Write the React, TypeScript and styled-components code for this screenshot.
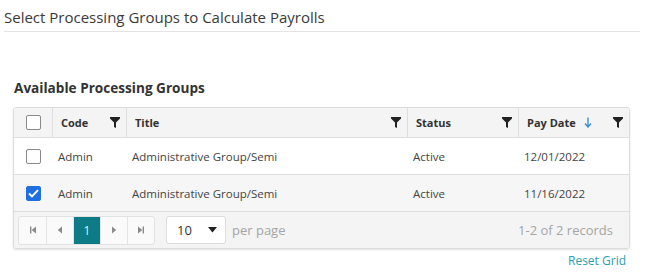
import React from "react";
import styled, { createGlobalStyle } from "styled-components";

const Global = createGlobalStyle`
  body { margin: 0; font-family: "Open Sans", "Noto Sans", sans-serif; color: #333; background: #fff; }
  * { box-sizing: border-box; }
`;

const Page = styled.div`
  width: 653px;
  padding: 7px 13px 0 4px;
`;

const Title = styled.h1`
  margin: 0;
  font-size: 15px;
  font-weight: 400;
  color: #3a3a3a;
  line-height: 20px;
  padding-bottom: 4px;
  border-bottom: 1px solid #e4e4e4;
`;

const Section = styled.div`
  padding: 46px 0 0 9px;
`;

const SectionTitle = styled.h2`
  margin: 0 0 9px 1px;
  font-size: 13.6px;
  font-weight: 700;
  color: #333;
  line-height: 20px;
`;

const Grid = styled.div`
  width: 617px;
  border: 1px solid #dcdcdc;
  border-radius: 3px;
  box-shadow: 0 1px 2px rgba(0, 0, 0, 0.12);
  overflow: hidden;
`;

const cols = "38px 74px 281px 111px 1fr";

const HeaderRow = styled.div`
  display: grid;
  grid-template-columns: ${cols};
  height: 30px;
  background: #f4f4f4;
  border-bottom: 1px solid #dedede;
`;

const HeadCell = styled.div`
  display: flex;
  align-items: center;
  padding: 0 6px 0 8px;
  font-size: 11px;
  font-weight: 700;
  color: #333;
  border-left: 1px solid #dedede;
  gap: 8px;
`;

const HeadLabel = styled.span`
  flex: 0 0 auto;
`;

const Spacer = styled.span`
  flex: 1;
`;

const Row = styled.div<{ $alt?: boolean }>`
  display: grid;
  grid-template-columns: ${cols};
  height: 37px;
  background: ${(p) => (p.$alt ? "#f6f6f6" : "#fff")};
  border-bottom: 1px solid #dedede;
`;

const Cell = styled.div`
  display: flex;
  align-items: center;
  padding: 0 6px;
  font-size: 11.5px;
  color: #444;
`;

const CheckCell = styled.div`
  display: flex;
  align-items: center;
  justify-content: flex-start;
  padding-left: 12px;
`;

const Box = styled.span<{ $checked?: boolean }>`
  width: 15px;
  height: 15px;
  border-radius: 2px;
  border: 1px solid ${(p) => (p.$checked ? "#1f6fe0" : "#8a8a8a")};
  background: ${(p) => (p.$checked ? "#1f6fe0" : "#fff")};
  display: flex;
  align-items: center;
  justify-content: center;
`;

const Pager = styled.div`
  height: 36px;
  background: #f4f4f4;
  display: flex;
  align-items: center;
  padding: 0 16px 0 4px;
`;

const PageButtons = styled.div`
  display: flex;
  border: 1px solid #e2e2e2;
  border-radius: 3px;
  overflow: hidden;
  background: #fafafa;
`;

const PageBtn = styled.div<{ $active?: boolean }>`
  width: 27px;
  height: 27px;
  display: flex;
  align-items: center;
  justify-content: center;
  font-size: 12px;
  color: ${(p) => (p.$active ? "#d9f2f4" : "#888")};
  background: ${(p) => (p.$active ? "#0e7c86" : "transparent")};
  & + & {
    border-left: 1px solid #e4e4e4;
  }
`;

const Select = styled.div`
  margin-left: 11px;
  width: 60px;
  height: 28px;
  border: 1px solid #dcdcdc;
  border-radius: 3px;
  background: #fff;
  display: flex;
  align-items: center;
  padding: 0 8px 0 10px;
  font-size: 13px;
  color: #333;
`;

const PerPage = styled.span`
  margin-left: 6px;
  font-size: 13px;
  color: #a5a5a5;
`;

const Records = styled.span`
  margin-left: auto;
  font-size: 13px;
  color: #a5a5a5;
`;

const ResetRow = styled.div`
  width: 617px;
  display: flex;
  justify-content: flex-end;
  padding: 3px 4px 0 0;
`;

const ResetLink = styled.a`
  font-size: 12px;
  color: #2a9fb0;
  text-decoration: none;
  line-height: 18px;
`;

const Filter = () => (
  <svg width="10" height="11" viewBox="0 0 10 11">
    <path d="M0 0h10v1.6L6 5.6V11L4 10V5.6L0 1.6z" fill="#222" />
  </svg>
);

const SortDown = () => (
  <svg width="8" height="11" viewBox="0 0 8 11">
    <path d="M4 0.5v9M1 6.5l3 3.5 3-3.5" stroke="#3d8fd8" strokeWidth="1.4" fill="none" />
  </svg>
);

const Check = () => (
  <svg width="11" height="9" viewBox="0 0 11 9">
    <path d="M1 4.5l3 3L10 1.2" stroke="#fff" strokeWidth="1.9" fill="none" />
  </svg>
);

const Tri = ({ dir }: { dir: "first" | "prev" | "next" | "last" }) => {
  const g = "#8a8a8a";
  if (dir === "first")
    return (
      <svg width="8" height="8" viewBox="0 0 8 8">
        <rect x="1" y="0.5" width="1.4" height="7" fill={g} />
        <path d="M7 0.5v7L2.6 4z" fill={g} />
      </svg>
    );
  if (dir === "last")
    return (
      <svg width="8" height="8" viewBox="0 0 8 8">
        <rect x="5.6" y="0.5" width="1.4" height="7" fill={g} />
        <path d="M1 0.5v7L5.4 4z" fill={g} />
      </svg>
    );
  if (dir === "prev")
    return (
      <svg width="6" height="8" viewBox="0 0 6 8">
        <path d="M5 0.5v7L0.8 4z" fill={g} />
      </svg>
    );
  return (
    <svg width="6" height="8" viewBox="0 0 6 8">
      <path d="M1 0.5v7L5.2 4z" fill={g} />
    </svg>
  );
};

const Caret = () => (
  <svg width="9" height="6" viewBox="0 0 9 6" style={{ marginLeft: "auto" }}>
    <path d="M0 0h9L4.5 5.5z" fill="#222" />
  </svg>
);

const rows = [
  { checked: false, code: "Admin", title: "Administrative Group/Semi", status: "Active", date: "12/01/2022" },
  { checked: true, code: "Admin", title: "Administrative Group/Semi", status: "Active", date: "11/16/2022" },
];

export default function App() {
  return (
    <Page>
      <Global />
      <Title>Select Processing Groups to Calculate Payrolls</Title>
      <Section>
        <SectionTitle>Available Processing Groups</SectionTitle>
        <Grid>
          <HeaderRow>
            <CheckCell>
              <Box />
            </CheckCell>
            <HeadCell>
              <HeadLabel>Code</HeadLabel>
              <Spacer />
              <Filter />
            </HeadCell>
            <HeadCell>
              <HeadLabel>Title</HeadLabel>
              <Spacer />
              <Filter />
            </HeadCell>
            <HeadCell>
              <HeadLabel>Status</HeadLabel>
              <Spacer />
              <Filter />
            </HeadCell>
            <HeadCell>
              <HeadLabel>Pay Date</HeadLabel>
              <SortDown />
              <Spacer />
              <Filter />
            </HeadCell>
          </HeaderRow>
          {rows.map((r, i) => (
            <Row key={i} $alt={i === 1}>
              <CheckCell>
                <Box $checked={r.checked}>{r.checked && <Check />}</Box>
              </CheckCell>
              <Cell>{r.code}</Cell>
              <Cell>{r.title}</Cell>
              <Cell>{r.status}</Cell>
              <Cell>{r.date}</Cell>
            </Row>
          ))}
          <Pager>
            <PageButtons>
              <PageBtn><Tri dir="first" /></PageBtn>
              <PageBtn><Tri dir="prev" /></PageBtn>
              <PageBtn $active>1</PageBtn>
              <PageBtn><Tri dir="next" /></PageBtn>
              <PageBtn><Tri dir="last" /></PageBtn>
            </PageButtons>
            <Select>
              10
              <Caret />
            </Select>
            <PerPage>per page</PerPage>
            <Records>1-2 of 2 records</Records>
          </Pager>
        </Grid>
        <ResetRow>
          <ResetLink href="#">Reset Grid</ResetLink>
        </ResetRow>
      </Section>
    </Page>
  );
}
